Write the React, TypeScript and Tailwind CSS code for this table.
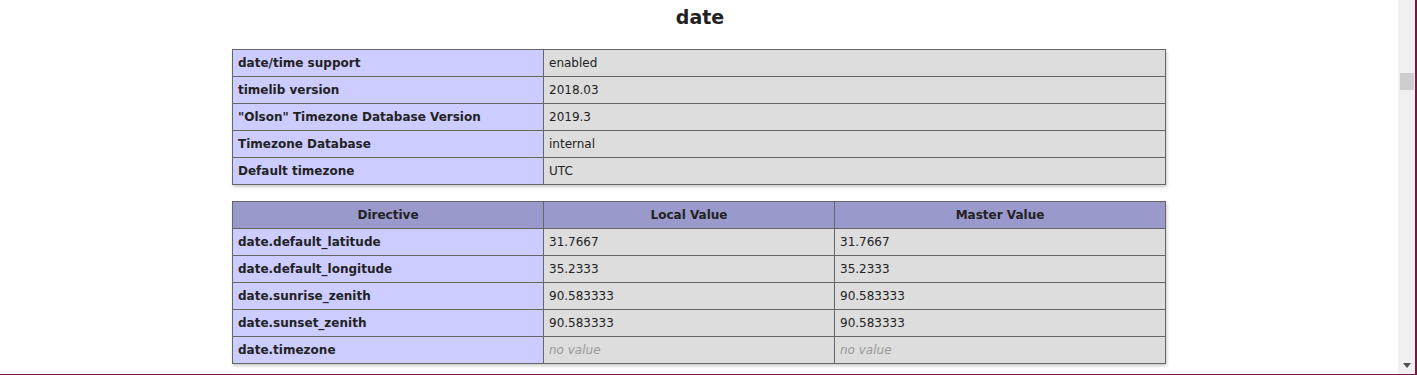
const info: [string, string][] = [
  ["date/time support", "enabled"],
  ["timelib version", "2018.03"],
  ['"Olson" Timezone Database Version', "2019.3"],
  ["Timezone Database", "internal"],
  ["Default timezone", "UTC"],
];

const directives: [string, string | null, string | null][] = [
  ["date.default_latitude", "31.7667", "31.7667"],
  ["date.default_longitude", "35.2333", "35.2333"],
  ["date.sunrise_zenith", "90.583333", "90.583333"],
  ["date.sunset_zenith", "90.583333", "90.583333"],
  ["date.timezone", null, null],
];

const cell = "border border-[#666] px-[5px] h-[27px] align-middle";

function Val({ v }: { v: string | null }) {
  if (v === null) return <i className="text-[#999]">no value</i>;
  return <>{v}</>;
}

export default function App() {
  return (
    <div
      className="w-[1417px] h-[375px] flex overflow-hidden bg-white border-r-2 border-b border-[#7b1642] text-[#222]"
      style={{ fontFamily: '"DejaVu Sans", Verdana, sans-serif' }}
    >
      <div className="flex-1 flex flex-col items-center">
        <h2 className="text-[19px] font-bold leading-none mt-[8px] mb-[22px] pl-[2px]">date</h2>

        <table className="w-[934px] table-fixed border-collapse text-[12px] shadow-[1px_2px_3px_#ccc]">
          <colgroup>
            <col className="w-[311px]" />
            <col />
          </colgroup>
          <tbody>
            {info.map(([k, v]) => (
              <tr key={k}>
                <td className={`${cell} text-left bg-[#ccf] font-bold`}>{k}</td>
                <td className={`${cell} text-left bg-[#ddd]`}>{v}</td>
              </tr>
            ))}
          </tbody>
        </table>

        <table className="mt-[16px] w-[934px] table-fixed border-collapse text-[12px] shadow-[1px_2px_3px_#ccc]">
          <colgroup>
            <col className="w-[311px]" />
            <col className="w-[291px]" />
            <col />
          </colgroup>
          <thead>
            <tr>
              <th className={`${cell} bg-[#99c] font-bold text-center`}>Directive</th>
              <th className={`${cell} bg-[#99c] font-bold text-center`}>Local Value</th>
              <th className={`${cell} bg-[#99c] font-bold text-center`}>Master Value</th>
            </tr>
          </thead>
          <tbody>
            {directives.map(([k, l, m]) => (
              <tr key={k}>
                <td className={`${cell} text-left bg-[#ccf] font-bold`}>{k}</td>
                <td className={`${cell} text-left bg-[#ddd]`}>
                  <Val v={l} />
                </td>
                <td className={`${cell} text-left bg-[#ddd]`}>
                  <Val v={m} />
                </td>
              </tr>
            ))}
          </tbody>
        </table>
      </div>

      {/* scrollbar */}
      <div className="w-[17px] bg-[#f0f0f0] flex flex-col items-center">
        <div className="h-[73px]" />
        <div className="w-[14px] h-[17px] bg-[#cdcdcd]" />
        <div className="flex-1" />
        <svg width="8" height="5" viewBox="0 0 8 5" className="mb-[6px]">
          <path d="M0 0h8L4 5z" fill="#505050" />
        </svg>
      </div>
    </div>
  );
}
